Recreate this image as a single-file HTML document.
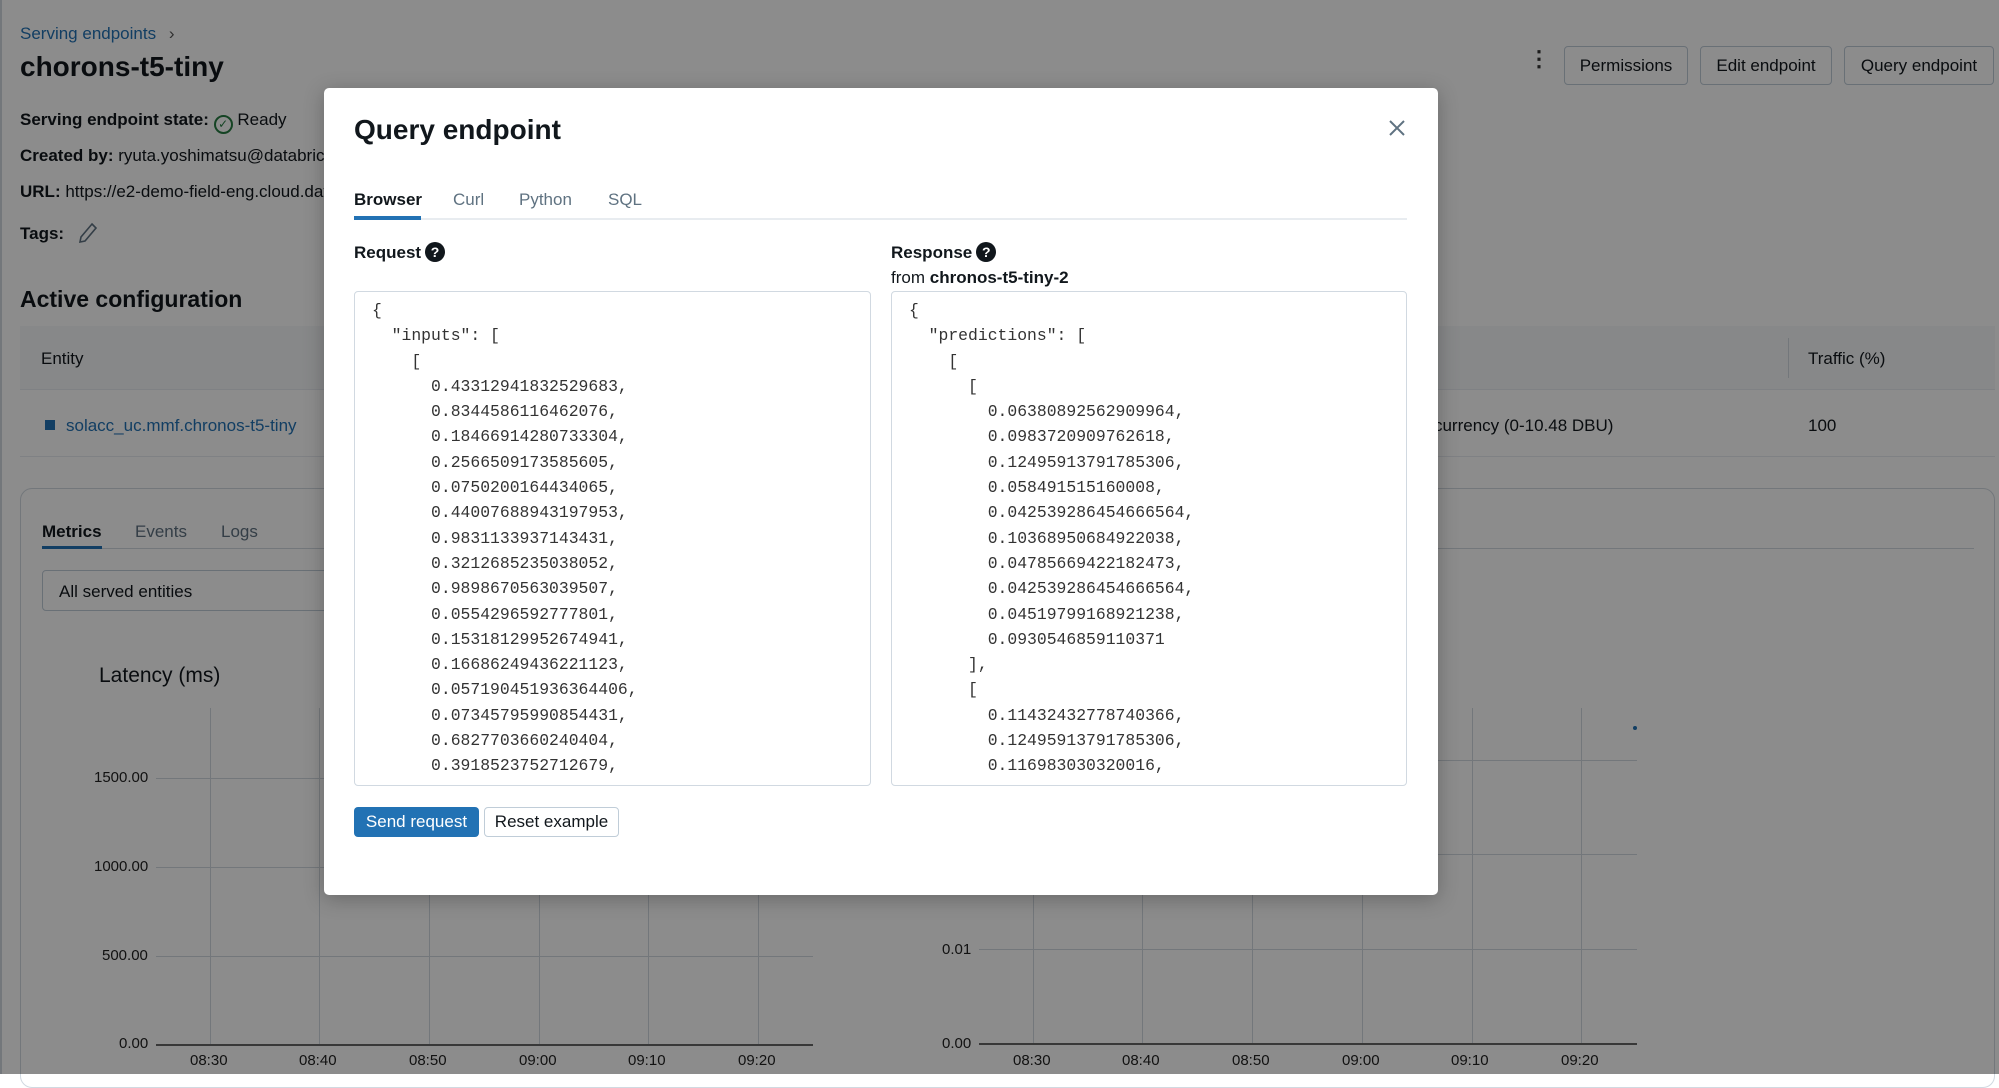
<!DOCTYPE html>
<html><head><meta charset="utf-8"><style>
*{box-sizing:border-box;margin:0;padding:0}
body{width:1999px;height:1074px;overflow:hidden;background:#fff;font-family:"Liberation Sans",sans-serif;color:#11171c;position:relative}
.a{position:absolute;white-space:nowrap}
.btn{position:absolute;border:1px solid #c0cdd8;border-radius:4px;background:#fff;font-size:17px;color:#11171c;display:flex;align-items:center;justify-content:center}
.gl{position:absolute;background:#d1d9e1}
.lbl{position:absolute;font-size:15px;color:#222;white-space:nowrap}
#ov{position:absolute;left:0;top:0;width:1999px;height:1074px;background:rgba(0,0,0,0.45)}
#modal{position:absolute;left:324px;top:88px;width:1114px;height:807px;background:#fff;border-radius:5px;box-shadow:0 4px 20px rgba(0,0,0,.25)}
.ta{position:absolute;border:1px solid #d1d9e1;border-radius:4px;background:#fff;overflow:hidden;font-family:"Liberation Mono",monospace;font-size:16.4px;line-height:25.3px;color:#333;padding:6px 0 0 17px;white-space:pre}
.q{display:inline-block;width:20px;height:20px;border-radius:50%;background:#11171c;color:#fff;font-size:14px;font-weight:bold;text-align:center;line-height:20px;vertical-align:1px;margin-left:4px}
</style></head><body>
<div class="a" style="left:0;top:0;width:2px;height:1074px;background:#d1d9e1"></div>
<div class="a" style="left:20px;top:24px;font-size:17px;color:#2272b4">Serving endpoints <span style="color:#555;margin-left:8px">›</span></div>
<div class="a" style="left:20px;top:51px;font-size:28px;font-weight:bold">chorons-t5-tiny</div>
<div class="a" style="left:20px;top:110px;font-size:17px"><b>Serving endpoint state:</b> <span style="display:inline-block;width:19px;height:19px;border:2px solid #277c43;border-radius:50%;vertical-align:-3px;color:#277c43;font-size:12px;text-align:center;line-height:15px">✓</span> Ready</div>
<div class="a" style="left:20px;top:146px;font-size:17px"><b>Created by:</b> ryuta.yoshimatsu@databricks.com</div>
<div class="a" style="left:20px;top:182px;font-size:17px"><b>URL:</b> https://e2-demo-field-eng.cloud.databricks.com</div>
<div class="a" style="left:20px;top:224px;font-size:17px"><b>Tags:</b></div>
<svg class="a" style="left:78px;top:222px" width="20" height="22" viewBox="0 0 20 22"><path d="M14 2L18 6L7 19L2 20L3 15Z" fill="none" stroke="#5f7281" stroke-width="1.6"/></svg>
<div class="a" style="left:1528px;top:54px;font-size:22px;font-weight:bold;color:#333;line-height:10px">⋮</div>
<div class="btn" style="left:1564px;top:46px;width:124px;height:39px">Permissions</div>
<div class="btn" style="left:1700px;top:46px;width:132px;height:39px">Edit endpoint</div>
<div class="btn" style="left:1844px;top:46px;width:150px;height:39px">Query endpoint</div>
<div class="a" style="left:20px;top:286px;font-size:23px;font-weight:bold">Active configuration</div>
<div class="a" style="left:20px;top:326px;width:1975px;height:64px;background:#f6f7f9;border-bottom:1px solid #e8ecf0"></div>
<div class="a" style="left:41px;top:349px;font-size:17px">Entity</div>
<div class="a" style="left:1788px;top:338px;width:1px;height:40px;background:#d1d9e1"></div>
<div class="a" style="left:1808px;top:349px;font-size:17px">Traffic (%)</div>
<div class="a" style="left:20px;top:456px;width:1975px;height:1px;background:#e8ecf0"></div>
<div class="a" style="left:45px;top:420px;width:10px;height:10px;background:#2272b4"></div>
<div class="a" style="left:66px;top:416px;font-size:17px;color:#2272b4">solacc_uc.mmf.chronos-t5-tiny</div>
<div class="a" style="left:1313px;top:416px;font-size:17px">Provisioned concurrency (0-10.48 DBU)</div>
<div class="a" style="left:1808px;top:416px;font-size:17px">100</div>
<div class="a" style="left:20px;top:488px;width:1975px;height:600px;border:1px solid #d1d9e1;border-radius:12px"></div>
<div class="a" style="left:42px;top:522px;font-size:17px;font-weight:bold">Metrics</div>
<div class="a" style="left:135px;top:522px;font-size:17px;color:#5f7281">Events</div>
<div class="a" style="left:221px;top:522px;font-size:17px;color:#5f7281">Logs</div>
<div class="a" style="left:42px;top:548px;width:1932px;height:1px;background:#d1d9e1"></div>
<div class="a" style="left:42px;top:546px;width:60px;height:3px;background:#2272b4"></div>
<div class="a" style="left:42px;top:570px;width:400px;height:41px;border:1px solid #c0cdd8;border-radius:4px;font-size:17px;padding:11px 16px">All served entities</div>
<div class="a" style="left:99px;top:664px;font-size:21px">Latency (ms)</div>
<div class="gl" style="left:156px;top:778px;width:657px;height:1px"></div>
<div class="gl" style="left:156px;top:867px;width:657px;height:1px"></div>
<div class="gl" style="left:156px;top:956px;width:657px;height:1px"></div>
<div class="a" style="left:156px;top:1044px;width:657px;height:2px;background:#666"></div>
<div class="gl" style="left:210px;top:708px;width:1px;height:336px"></div>
<div class="gl" style="left:319px;top:708px;width:1px;height:336px"></div>
<div class="gl" style="left:429px;top:708px;width:1px;height:336px"></div>
<div class="gl" style="left:539px;top:708px;width:1px;height:336px"></div>
<div class="gl" style="left:648px;top:708px;width:1px;height:336px"></div>
<div class="gl" style="left:758px;top:708px;width:1px;height:336px"></div>
<div class="lbl" style="left:94px;top:769px">1500.00</div>
<div class="lbl" style="left:94px;top:858px">1000.00</div>
<div class="lbl" style="left:102px;top:947px">500.00</div>
<div class="lbl" style="left:119px;top:1035px">0.00</div>
<div class="lbl" style="left:190px;top:1052px">08:30</div><div class="lbl" style="left:299px;top:1052px">08:40</div><div class="lbl" style="left:409px;top:1052px">08:50</div><div class="lbl" style="left:519px;top:1052px">09:00</div><div class="lbl" style="left:628px;top:1052px">09:10</div><div class="lbl" style="left:738px;top:1052px">09:20</div>
<div class="gl" style="left:979px;top:760px;width:658px;height:1px"></div>
<div class="gl" style="left:979px;top:854px;width:658px;height:1px"></div>
<div class="gl" style="left:979px;top:949px;width:658px;height:1px"></div>
<div class="a" style="left:979px;top:1043px;width:658px;height:2px;background:#666"></div>
<div class="gl" style="left:1033px;top:708px;width:1px;height:335px"></div>
<div class="gl" style="left:1142px;top:708px;width:1px;height:335px"></div>
<div class="gl" style="left:1252px;top:708px;width:1px;height:335px"></div>
<div class="gl" style="left:1362px;top:708px;width:1px;height:335px"></div>
<div class="gl" style="left:1472px;top:708px;width:1px;height:335px"></div>
<div class="gl" style="left:1581px;top:708px;width:1px;height:335px"></div>
<div class="a" style="left:1633px;top:726px;width:4px;height:4px;border-radius:50%;background:#2272b4"></div>
<div class="lbl" style="left:942px;top:941px">0.01</div>
<div class="lbl" style="left:942px;top:1035px">0.00</div>
<div class="lbl" style="left:1013px;top:1052px">08:30</div><div class="lbl" style="left:1122px;top:1052px">08:40</div><div class="lbl" style="left:1232px;top:1052px">08:50</div><div class="lbl" style="left:1342px;top:1052px">09:00</div><div class="lbl" style="left:1451px;top:1052px">09:10</div><div class="lbl" style="left:1561px;top:1052px">09:20</div>

<div id="ov"></div>
<div id="modal">
<div class="a" style="left:30px;top:26px;font-size:28px;font-weight:bold">Query endpoint</div>
<svg class="a" style="left:1064px;top:31px" width="18" height="18" viewBox="0 0 18 18"><path d="M2 2L16 16M16 2L2 16" stroke="#5f7281" stroke-width="2"/></svg>
<div class="a" style="left:30px;top:102px;font-size:17px;font-weight:bold">Browser</div>
<div class="a" style="left:129px;top:102px;font-size:17px;color:#5f7281">Curl</div>
<div class="a" style="left:195px;top:102px;font-size:17px;color:#5f7281">Python</div>
<div class="a" style="left:284px;top:102px;font-size:17px;color:#5f7281">SQL</div>
<div class="a" style="left:30px;top:130px;width:1053px;height:2px;background:#e8ecf0"></div>
<div class="a" style="left:30px;top:128px;width:67px;height:4px;background:#2272b4"></div>
<div class="a" style="left:30px;top:154px;font-size:17px;font-weight:bold">Request<span class="q">?</span></div>
<div class="a" style="left:567px;top:154px;font-size:17px;font-weight:bold">Response<span class="q">?</span></div>
<div class="a" style="left:567px;top:180px;font-size:17px">from <b>chronos-t5-tiny-2</b></div>
<div class="ta" style="left:30px;top:203px;width:517px;height:495px">{
  "inputs": [
    [
      0.43312941832529683,
      0.8344586116462076,
      0.18466914280733304,
      0.2566509173585605,
      0.0750200164434065,
      0.44007688943197953,
      0.9831133937143431,
      0.3212685235038052,
      0.9898670563039507,
      0.0554296592777801,
      0.15318129952674941,
      0.16686249436221123,
      0.057190451936364406,
      0.07345795990854431,
      0.6827703660240404,
      0.3918523752712679,
      0.5</div>
<div class="ta" style="left:567px;top:203px;width:516px;height:495px">{
  "predictions": [
    [
      [
        0.06380892562909964,
        0.0983720909762618,
        0.12495913791785306,
        0.058491515160008,
        0.042539286454666564,
        0.10368950684922038,
        0.04785669422182473,
        0.042539286454666564,
        0.04519799168921238,
        0.0930546859110371
      ],
      [
        0.11432432778740366,
        0.12495913791785306,
        0.116983030320016,
        0.1</div>
<div class="a" style="left:30px;top:719px;width:125px;height:30px;background:#2272b4;border-radius:4px;color:#fff;font-size:17px;text-align:center;line-height:30px">Send request</div>
<div class="a" style="left:160px;top:719px;width:135px;height:30px;border:1px solid #c0cdd8;border-radius:4px;font-size:17px;text-align:center;line-height:28px">Reset example</div>
</div>
</body></html>
